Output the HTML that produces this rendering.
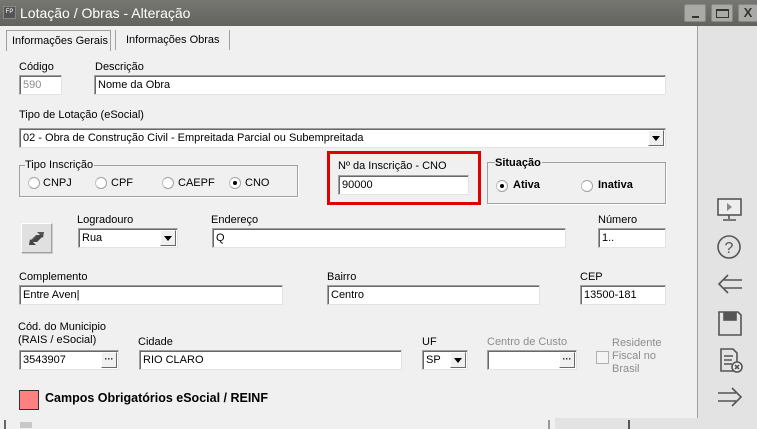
<!DOCTYPE html>
<html><head><meta charset="utf-8"><style>
*{margin:0;padding:0;box-sizing:border-box}
body{width:757px;height:429px;overflow:hidden;background:#f0f0f0;font-family:"Liberation Sans",sans-serif;font-size:11px;color:#000;position:relative}
.a{position:absolute;white-space:nowrap}
.in{position:absolute;background:#fff;border:1px solid #a0a0a0;border-right-color:#e3e3e3;border-bottom-color:#e3e3e3;box-shadow:inset 1px 1px 0 #696969;height:20px;padding:3px 0 0 3px;font-size:11px}
.btn{position:absolute;width:16px;height:16px;top:1px;right:1px;background:#f0f0f0;border:1px solid;border-color:#fff #696969 #696969 #fff;font-size:9px;text-align:center;line-height:12px;font-weight:bold}
.arr{position:absolute;width:0;height:0;border-left:4px solid transparent;border-right:4px solid transparent;border-top:5px solid #000;left:3px;top:5px}
.grp{position:absolute;border:1px solid #a0a0a0;box-shadow:1px 1px 0 #fff}
.rad{position:absolute;width:12px;height:12px;border-radius:50%;background:#fff;border:1px solid #a0a0a0;border-left-color:#c0c0c0}
.dot{position:absolute;left:3px;top:3px;width:4px;height:4px;border-radius:50%;background:#000}
.g{color:#8d8d8d}
</style></head><body>
<div class="a" style="left:0;top:0;width:757px;height:26px;background:linear-gradient(#777772,#62625e)"></div>
<div class="a" style="left:3px;top:6px;width:13px;height:13px;background:#555;border:1px solid #888;color:#fff;font-size:6px;line-height:11px;text-align:center">FP</div>
<div class="a" style="left:20px;top:5px;color:#fff;font-size:14px">Lotação / Obras - Alteração</div>
<div class="a" style="left:684px;top:4px;width:22px;height:18px;background:#a9a9a6;border:1px solid #888;border-radius:2px"><div class="a" style="left:7px;top:11px;width:7px;height:2px;background:#333"></div></div>
<div class="a" style="left:711px;top:4px;width:22px;height:18px;background:#a9a9a6;border:1px solid #888;border-radius:2px"><div class="a" style="left:4px;top:4px;width:13px;height:9px;border:1px solid #333;border-top-width:2px"></div></div>
<div class="a" style="left:738px;top:4px;width:20px;height:18px;background:#a9a9a6;border:1px solid #888;border-radius:2px;font-weight:bold;font-size:13px;color:#333;text-align:center;line-height:16px">X</div>

<div class="a" style="left:697px;top:26px;width:1px;height:392px;background:#a0a0a0"></div>
<div class="a" style="left:698px;top:26px;width:59px;height:392px;background:#e3e3e3"></div>
<div class="a" style="left:0;top:418px;width:757px;height:11px;background:#f0f0f0"></div>
<div class="a" style="left:4px;top:420px;width:2px;height:9px;background:#666"></div>
<div class="a" style="left:20px;top:422px;width:12px;height:6px;background:#c8c8c8"></div>
<div class="a" style="left:548px;top:420px;width:2px;height:9px;background:#999"></div>
<div class="a" style="left:555px;top:418px;width:202px;height:11px;background:#e3e3e3"></div>
<div class="a" style="left:628px;top:420px;width:2px;height:9px;background:#555"></div>

<!-- tabs -->
<div class="a" style="left:6px;top:30px;width:105px;height:21px;border:1px solid #a0a0a0;border-bottom:none;background:#f0f0f0;padding:4px 0 0 5px;font-size:11px;overflow:hidden">Informações Gerais</div>
<div class="a" style="left:115px;top:30px;width:1px;height:20px;background:#a0a0a0"></div>
<div class="a" style="left:126px;top:34px;font-size:11px">Informações Obras</div>
<div class="a" style="left:229px;top:30px;width:1px;height:20px;background:#a0a0a0"></div>

<div class="a" style="left:19px;top:61px">Código</div>
<div class="in g" style="left:19px;top:75px;width:43px;color:#8d8d8d">590</div>
<div class="a" style="left:95px;top:61px">Descrição</div>
<div class="in" style="left:94px;top:75px;width:572px">Nome da Obra</div>

<div class="a" style="left:19px;top:109px">Tipo de Lotação (eSocial)</div>
<div class="in" style="left:19px;top:128px;width:647px">02 - Obra de Construção Civil - Empreitada Parcial ou Subempreitada<div class="btn"><div class="arr"></div></div></div>

<div class="grp" style="left:19px;top:165px;width:279px;height:32px"></div>
<div class="a" style="left:25px;top:159px;background:#f0f0f0;padding-right:1px">Tipo Inscrição</div>
<div class="rad" style="left:28px;top:177px"></div><div class="a" style="left:43px;top:177px">CNPJ</div>
<div class="rad" style="left:95px;top:177px"></div><div class="a" style="left:111px;top:177px">CPF</div>
<div class="rad" style="left:162px;top:177px"></div><div class="a" style="left:178px;top:177px">CAEPF</div>
<div class="rad" style="left:229px;top:177px"><div class="dot"></div></div><div class="a" style="left:245px;top:177px">CNO</div>

<div class="a" style="left:327px;top:151px;width:154px;height:54px;border:3px solid #e00000"></div>
<div class="a" style="left:338px;top:160px">Nº da Inscrição - CNO</div>
<div class="in" style="left:338px;top:175px;width:131px">90000</div>

<div class="grp" style="left:487px;top:162px;width:179px;height:42px"></div>
<div class="a" style="left:495px;top:157px;background:#f0f0f0;font-weight:bold;padding-right:1px">Situação</div>
<div class="rad" style="left:496px;top:180px"><div class="dot"></div></div><div class="a" style="left:513px;top:179px;font-weight:bold">Ativa</div>
<div class="rad" style="left:581px;top:180px"></div><div class="a" style="left:598px;top:179px;font-weight:bold">Inativa</div>

<div class="a" style="left:21px;top:223px;width:31px;height:30px;background:#e0e0e0;border:1px solid;border-color:#fff #a0a0a0 #a0a0a0 #fff;box-shadow:1px 1px 0 #ccc">
<svg width="29" height="28" style="position:absolute;left:0;top:0"><path d="M8 17 L14 11 L18 11 L15 8 L22 8 L21 14 L19 12 L13 18 L9 18Z" fill="#555"/><path d="M21 12 L15 18 L11 18 L14 21 L7 21 L8 15 L10 17 L16 11 L20 11Z" fill="#444"/></svg></div>

<div class="a" style="left:77px;top:214px">Logradouro</div>
<div class="in" style="left:78px;top:228px;width:100px">Rua<div class="btn"><div class="arr"></div></div></div>
<div class="a" style="left:211px;top:214px">Endereço</div>
<div class="in" style="left:212px;top:228px;width:354px">Q</div>
<div class="a" style="left:598px;top:214px">Número</div>
<div class="in" style="left:598px;top:228px;width:68px">1..</div>

<div class="a" style="left:19px;top:271px">Complemento</div>
<div class="in" style="left:19px;top:285px;width:264px">Entre Aven|</div>
<div class="a" style="left:327px;top:271px">Bairro</div>
<div class="in" style="left:327px;top:285px;width:213px">Centro</div>
<div class="a" style="left:580px;top:271px">CEP</div>
<div class="in" style="left:580px;top:285px;width:86px">13500-181</div>

<div class="a" style="left:18px;top:321px;line-height:13px">Cód. do Municipio<br>(RAIS / eSocial)</div>
<div class="in" style="left:19px;top:350px;width:100px">3543907<div class="btn">···</div></div>
<div class="a" style="left:138px;top:336px">Cidade</div>
<div class="in" style="left:139px;top:350px;width:263px">RIO CLARO</div>
<div class="a" style="left:422px;top:336px">UF</div>
<div class="in" style="left:422px;top:350px;width:46px">SP<div class="btn"><div class="arr"></div></div></div>
<div class="a g" style="left:487px;top:336px">Centro de Custo</div>
<div class="in" style="left:487px;top:350px;width:90px"><div class="btn">···</div></div>
<div class="a" style="left:596px;top:351px;width:13px;height:13px;border:1px solid #b0b0b0;background:#f4f4f4"></div>
<div class="a g" style="left:612px;top:337px;line-height:13px">Residente<br>Fiscal no<br>Brasil</div>

<div class="a" style="left:19px;top:390px;width:20px;height:20px;background:#ff8080;border:1px solid #333"></div>
<div class="a" style="left:45px;top:391px;font-weight:bold;font-size:12.5px">Campos Obrigatórios eSocial / REINF</div>

<svg class="a" style="left:710px;top:195px" width="40" height="220" fill="none" stroke="#555" stroke-width="1.6">
<rect x="8" y="4" width="23" height="16" fill="#eee"/><path d="M17 8 L22 12 L17 16Z" fill="#888" stroke="none"/><path d="M19 20 V24 M13 25 H26"/>
<circle cx="19" cy="52" r="11"/><text x="19" y="58" font-size="16" fill="#555" stroke="none" text-anchor="middle" font-family="Liberation Sans">?</text>
<path d="M32 85 H14 M32 93 H14 M18 80 L9 89 L18 98"/>
<path d="M9 117 H28 L31 120 V140 H9Z"/><rect x="14" y="118" width="12" height="7" fill="#555"/>
<path d="M11 154 H23 L27 158 V176 H11Z"/><path d="M14 161 H23 M14 165 H22 M14 169 H22"/><circle cx="27" cy="172" r="5" fill="#eee"/><path d="M25 170 L29 174 M29 170 L25 174"/>
<path d="M8 198 H26 M8 206 H26 M22 193 L31 202 L22 211"/>
</svg>
</body></html>
